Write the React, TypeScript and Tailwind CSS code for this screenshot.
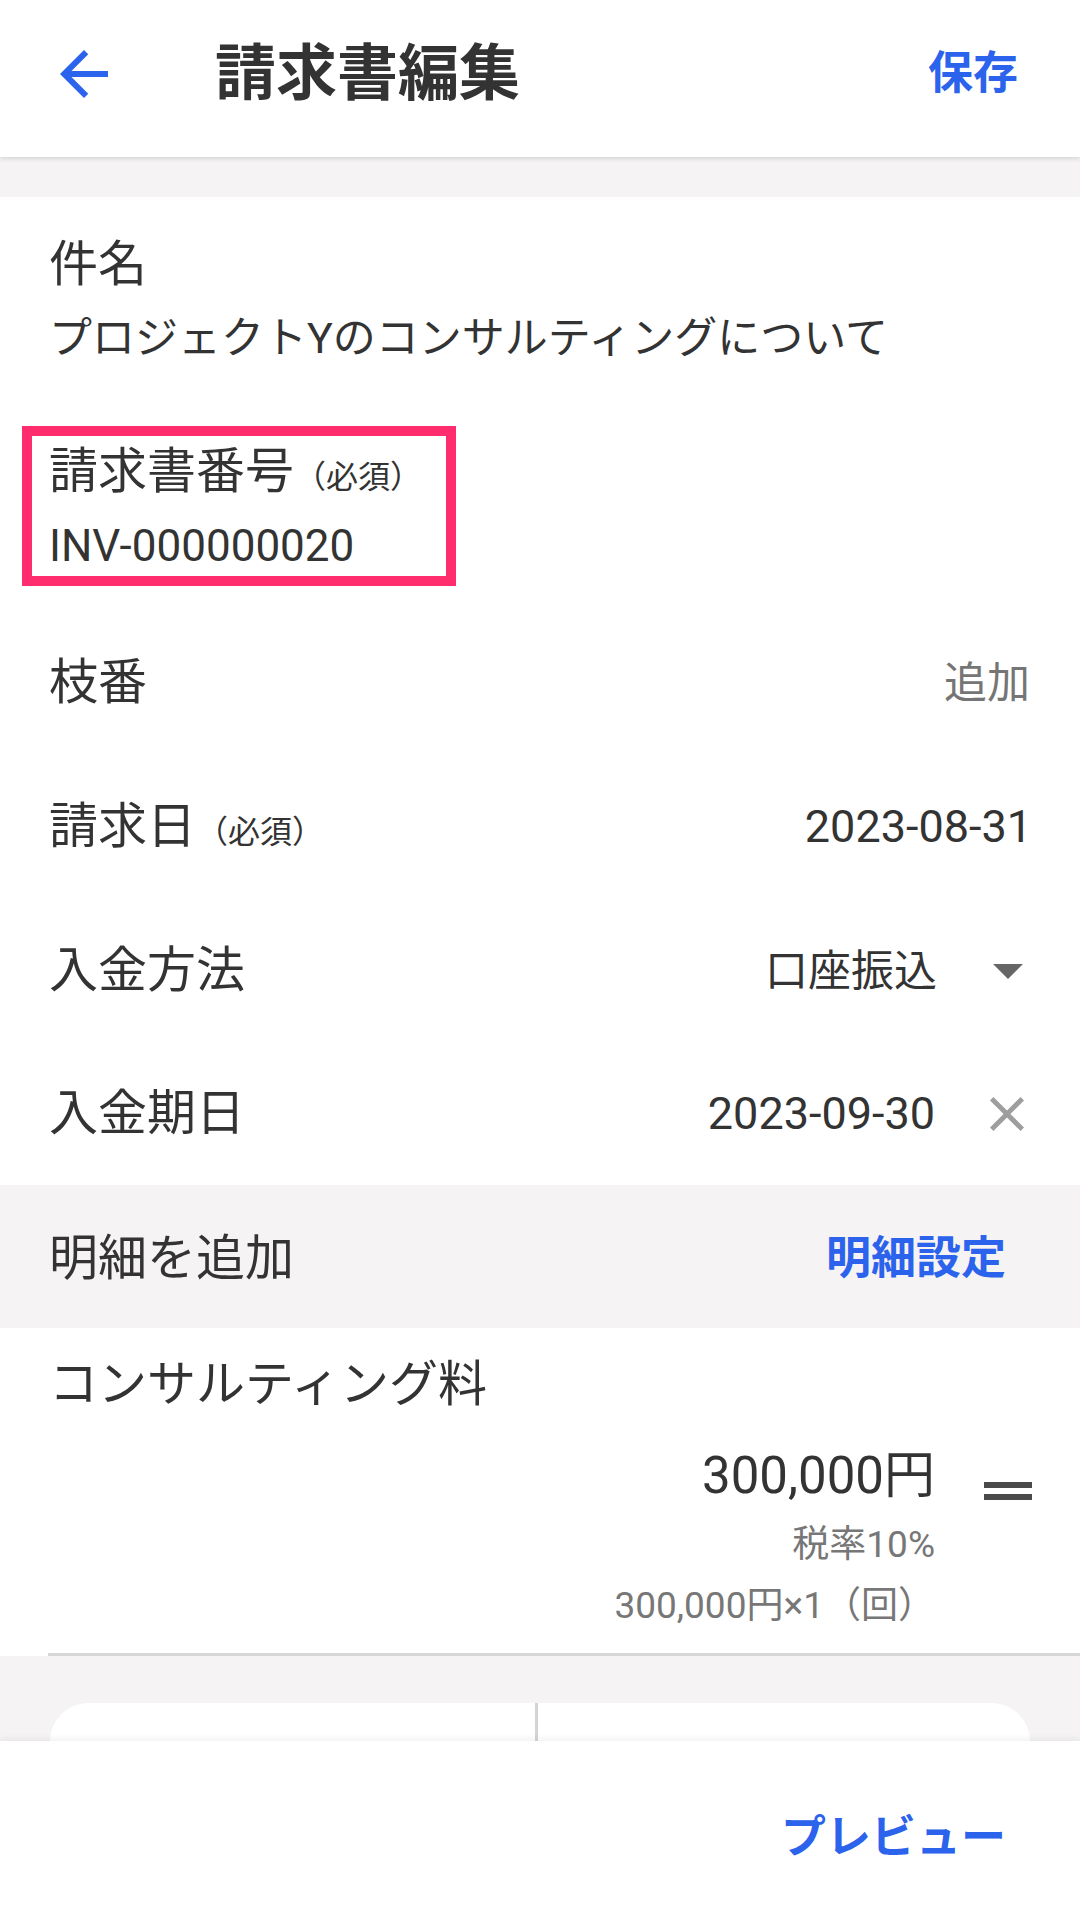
import React from "react";

const BLUE = "text-[#2b63ec]";

function Row({
  label,
  req,
  right,
  h,
}: {
  label: string;
  req?: boolean;
  right: React.ReactNode;
  h: string;
}) {
  return (
    <div className={`flex items-center justify-between pl-[49px] ${h}`}>
      <div className="text-[49px] leading-[60px] text-[#333]">
        {label}
        {req && <span className="text-[32px] leading-[0]">（必須）</span>}
      </div>
      {right}
    </div>
  );
}

export default function App() {
  return (
    <div className="w-[1080px] h-[1927px] overflow-hidden bg-[#f5f3f4] font-['Roboto','Noto_Sans_CJK_JP',sans-serif] flex flex-col">
      {/* Header */}
      <header className="relative z-10 h-[157px] shrink-0 bg-white flex items-center pl-[48px] pr-[62px] pb-[9px] shadow-[0_2px_4px_rgba(0,0,0,0.12)]">
        <svg width="72" height="72" viewBox="0 0 24 24" className="fill-[#2b63ec]">
          <path d="M20 11H7.83l5.59-5.59L12 4l-8 8 8 8 1.41-1.41L7.83 13H20v-2z" />
        </svg>
        <div className="ml-[95px] text-[61px] leading-[72px] font-bold text-[#333]">請求書編集</div>
        <div className={`ml-auto text-[45px] leading-[56px] font-bold ${BLUE}`}>保存</div>
      </header>

      <div className="h-[40px] shrink-0" />

      {/* Form */}
      <section className="bg-white pt-[38px] shrink-0">
        <div className="pl-[49px]">
          <div className="text-[49px] leading-[60px] text-[#333]">件名</div>
          <div className="mt-[15px] text-[43px] leading-[56px] text-[#333]">
            プロジェクトYのコンサルティングについて
          </div>
        </div>

        <div className="mt-[60px] ml-[22px] w-[434px] border-[10px] border-[#ff2d6e] pl-[17px] pt-[6px] pb-[2px]">
          <div className="text-[49px] leading-[60px] text-[#333]">
            請求書番号<span className="text-[32px] leading-[0]">（必須）</span>
          </div>
          <div className="mt-[16px] text-[44px] leading-[56px] text-[#333]">INV-000000020</div>
        </div>

        <div className="mt-[25px]">
          <Row
            label="枝番"
            h="h-[144px]"
            right={<div className="pr-[50px] text-[43px] leading-[56px] text-[#757575]">追加</div>}
          />
          <Row
            label="請求日"
            req
            h="h-[144px]"
            right={<div className="pr-[48px] text-[45px] leading-[56px] text-[#333]">2023-08-31</div>}
          />
          <Row
            label="入金方法"
            h="h-[144px]"
            right={
              <div className="flex items-center gap-[56px] pr-[57px]">
                <div className="text-[43px] leading-[56px] text-[#333]">口座振込</div>
                <svg width="30" height="15" viewBox="0 0 30 15">
                  <polygon points="0,0 30,0 15,15" fill="#666" />
                </svg>
              </div>
            }
          />
          <Row
            label="入金期日"
            h="h-[142px]"
            right={
              <div className="flex items-center gap-[55px] pr-[56px]">
                <div className="text-[45px] leading-[56px] text-[#333]">2023-09-30</div>
                <svg width="34" height="34" viewBox="5 5 14 14" className="fill-[#9e9e9e]">
                  <path d="M19 6.41L17.59 5 12 10.59 6.41 5 5 6.41 10.59 12 5 17.59 6.41 19 12 13.41 17.59 19 19 17.59 13.41 12z" />
                </svg>
              </div>
            }
          />
        </div>
      </section>

      {/* Detail header */}
      <section className="h-[143px] shrink-0 flex items-center justify-between pl-[49px] pr-[74px] pt-[5px]">
        <div className="text-[49px] leading-[60px] text-[#333]">明細を追加</div>
        <div className={`text-[45px] leading-[56px] font-bold ${BLUE}`}>明細設定</div>
      </section>

      {/* Item */}
      <section className="bg-white shrink-0 pt-[27px]">
        <div className="pl-[49px] text-[49px] leading-[60px] text-[#333]">コンサルティング料</div>
        <div className="mt-[31px] flex justify-end items-start pr-[48px]">
          <div className="flex flex-col items-end">
            <div className="text-[51px] leading-[60px] text-[#333]">300,000円</div>
            <div className="mt-[17px] text-[37px] leading-[44px] text-[#777]">税率10%</div>
            <div className="mt-[17px] text-[37px] leading-[44px] text-[#777]">300,000円×1（回）</div>
          </div>
          <svg width="48" height="18" viewBox="0 0 48 18" className="ml-[49px] mt-[36px]">
            <rect x="0" y="0" width="48" height="6" fill="#4a4a4a" />
            <rect x="0" y="12" width="48" height="6" fill="#4a4a4a" />
          </svg>
        </div>
        <div className="mt-[25px] ml-[48px] h-[3px] bg-[#d6d6d6]" />
      </section>

      {/* Peek card */}
      <section className="shrink-0 pt-[47px] px-[50px]">
        <div className="h-[38px] bg-white rounded-t-[45px] flex">
          <div className="w-[488px] border-r-[3px] border-[#d4d4d4]" />
          <div className="flex-1" />
        </div>
      </section>

      {/* Bottom bar */}
      <footer className="relative z-10 flex-1 bg-white flex items-start justify-end pr-[74px] pt-[69px] shadow-[0_-3px_6px_rgba(0,0,0,0.05)]">
        <div className={`text-[45px] leading-[56px] font-bold ${BLUE}`}>プレビュー</div>
      </footer>
    </div>
  );
}
